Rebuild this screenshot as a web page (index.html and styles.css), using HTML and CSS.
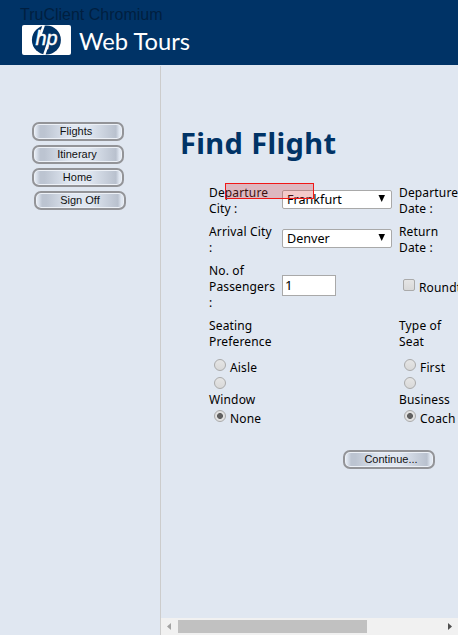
FILE: index.html
```html
<!DOCTYPE html>
<html lang="en">
<head>
<meta charset="utf-8">
<title>Web Tours</title>
<link rel="stylesheet" href="styles.css">
</head>
<body>
<header class="banner">
  <div class="brand">
    <svg class="logo" width="49" height="30" viewBox="0 0 49 30">
      <rect width="49" height="30" rx="2" fill="#fff"/>
      <circle cx="24.4" cy="15" r="14.5" fill="#036"/>
      <path d="M21.8 0 L18.4 10 M25.6 20 L22.2 30" stroke="#fff" stroke-width="2.4"/>
      <text class="hp" x="13.5" y="20.3" textLength="22" lengthAdjust="spacingAndGlyphs">hp</text>
    </svg>
    <svg class="name" width="113" height="30"><text x="0" y="24.5" textLength="111" lengthAdjust="spacingAndGlyphs">Web Tours</text></svg>
  </div>
  <div class="watermark">TruClient Chromium</div>
</header>
<div class="frames">
  <nav class="sidebar">
    <button class="btn">Flights</button>
    <button class="btn">Itinerary</button>
    <button class="btn home">Home</button>
    <button class="btn signoff">Sign Off</button>
  </nav>
  <main class="main">
    <h1>Find Flight</h1>
    <div class="form">
      <div class="row">
        <div class="label">Departure<br>City :</div>
        <div class="select">Frankfurt<svg width="8" height="7"><path d="M0.5 0H7L3.7 7Z"/></svg></div>
        <div class="label">Departure<br>Date :</div>
        <div class="highlight"></div>
      </div>
      <div class="row">
        <div class="label">Arrival City<br>:</div>
        <div class="select">Denver<svg width="8" height="7"><path d="M0.5 0H7L3.7 7Z"/></svg></div>
        <div class="label">Return<br>Date :</div>
      </div>
      <div class="row tall">
        <div class="label">No. of<br>Passengers<br>:</div>
        <div class="input">1</div>
        <div class="option check"><i class="box"></i>Roundt</div>
      </div>
      <div class="row">
        <div class="label">Seating<br>Preference</div>
        <div></div>
        <div class="label">Type of<br>Seat</div>
      </div>
      <div class="row choices">
        <div>
          <div class="option"><i class="radio"></i>Aisle</div>
          <div class="option bare"><i class="radio"></i></div>
          <div class="label">Window</div>
          <div class="option last"><i class="radio on"></i>None</div>
        </div>
        <div></div>
        <div>
          <div class="option"><i class="radio"></i>First</div>
          <div class="option bare"><i class="radio"></i></div>
          <div class="label">Business</div>
          <div class="option last"><i class="radio on"></i>Coach</div>
        </div>
      </div>
    </div>
    <button class="btn continue">Continue...</button>
    <div class="scrollbar">
      <svg width="4" height="7"><path d="M4 0V7L0 3.5Z" fill="#a3a3a3"/></svg>
      <div class="thumb"></div>
      <svg class="right" width="4" height="7"><path d="M0 0V7L4 3.5Z" fill="#505050"/></svg>
    </div>
  </main>
</div>
</body>
</html>
```

FILE: styles.css
```css
* { box-sizing: border-box; }
body {
  margin: 0;
  width: 458px;
  height: 635px;
  overflow: hidden;
  background: #e0e7f1;
  color: #000;
  font: 12px/16px "Noto Sans", sans-serif;
  letter-spacing: 0.15px;
}
.banner { position: relative; height: 65px; background: #036; }
.brand { display: flex; padding: 25px 0 0 22px; }
.logo { display: block; }
.hp { font: italic 21px "Liberation Sans", sans-serif; letter-spacing: 0; fill: #fff; stroke: #fff; stroke-width: 0.5px; }
.name {
  margin-left: 8px;
  font: 24px Lato, sans-serif;
  letter-spacing: 0;
  fill: #fff;
}
.watermark {
  position: absolute;
  left: 20px;
  top: 5px;
  font: 16px/19px "Liberation Sans", sans-serif;
  letter-spacing: 0;
  color: #001f40;
}
.frames { display: flex; height: 570px; }
.sidebar {
  display: flex;
  flex-direction: column;
  gap: 4px;
  width: 161px;
  height: 569px;
  margin-top: 1px;
  padding: 56px 0 0 32px;
  border-right: 1px solid #ccc;
}
.btn {
  display: block;
  width: 92px;
  height: 19px;
  padding: 0 4px 1px 0;
  border: 2px solid #939498;
  border-radius: 7px;
  background: linear-gradient(90deg, #e0e7f1 2%, #bcc4d1 7%, #bcc4d1 12%, #e0e7f1 40%, #e0e7f1 62%, #b9c1ce 93%, #e0e7f1 97%);
  box-shadow: inset 0 0 0 1px #edf1f7;
  font: 11px/14px "Liberation Sans", sans-serif;
  letter-spacing: 0;
  color: #111;
}
.sidebar .btn:nth-child(2) { padding-right: 2px; }
.home { padding-right: 1px; }
.signoff { margin-left: 2px; padding-right: 0; }
.main { display: flex; flex-direction: column; flex: 1; min-width: 0; overflow: hidden; }
h1 {
  margin: 60px 0 0 19px;
  height: 36px;
  font: bold 29px/36px "Noto Sans", sans-serif;
  letter-spacing: 0.38px;
  color: #036;
  white-space: nowrap;
}
.form { display: flex; flex-direction: column; gap: 7px; margin: 23px 0 0 48px; }
.row { position: relative; display: grid; grid-template-columns: 73px 117px 100px; height: 32px; align-items: center; white-space: nowrap; }
.label { padding-top: 1px; margin-bottom: -1px; }
.tall { height: 48px; }
.select {
  display: flex;
  justify-content: space-between;
  align-items: center;
  width: 110px;
  height: 19px;
  margin-bottom: 1px;
  padding: 0 5px 0 4px;
  border: 1px solid #a9a9a9;
  border-radius: 2px;
  background: #fff;
  font-size: 12.6px;
  letter-spacing: 0;
}
.select svg { margin-top: -2px; }
.input { width: 54px; height: 21px; margin-bottom: 1px; padding: 0 2px; border: 1px solid #a9a9a9; background: #fff; font-size: 13.33px; line-height: 19px; }
.highlight { position: absolute; left: 16px; top: -1px; width: 89px; height: 16px; border: 1px solid #f01818; background: rgba(215, 65, 65, .28); }
.option { display: flex; height: 18px; padding-left: 5px; line-height: 20px; }
.radio, .box { flex: none; width: 12px; height: 12px; margin: 1px 4px 0 0; border: 1px solid #aaa; background: linear-gradient(#e5e5e5, #d9d9d9); }
.radio { border-radius: 50%; }
.on { background: radial-gradient(circle, #606060 0 2.6px, #e2e2e2 3.3px); }
.box { border-radius: 2px; }
.check { padding-left: 4px; margin-top: 1px; }
.check .box { margin-top: 1px; }
.choices { height: 69px; margin-top: 2px; align-items: start; }
.bare { height: 15px; }
.last { margin-top: 2px; }
.continue { flex: none; margin: 23px 0 0 182px; padding: 0 0 1px 4px; }
.scrollbar { display: flex; align-items: center; flex: none; height: 17px; margin-top: auto; padding: 0 6px; background: #f1f1f1; }
.thumb { width: 189px; height: 13px; margin-left: 7px; background: #c1c1c1; }
.right { margin-left: auto; }
```
